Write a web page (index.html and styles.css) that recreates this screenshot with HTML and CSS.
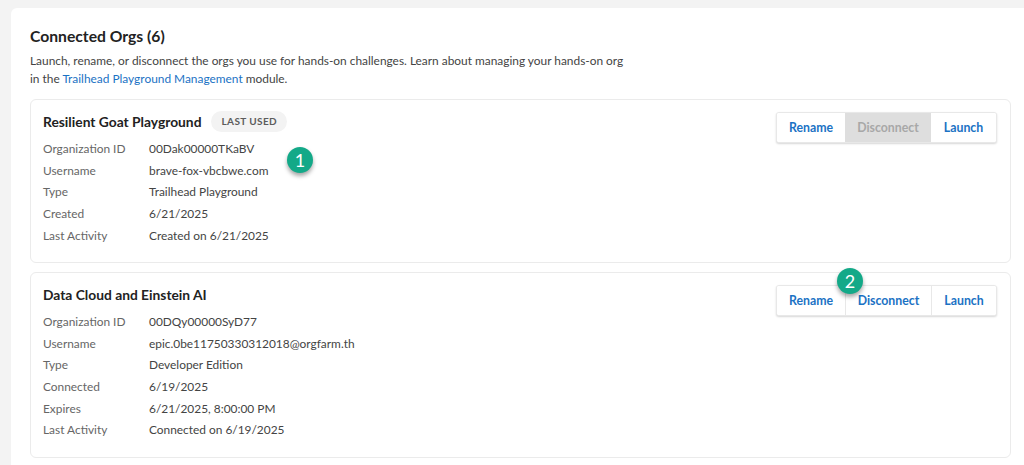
FILE: index.html
```html
<!DOCTYPE html>
<html lang="en">
<head>
<meta charset="utf-8">
<title>Connected Orgs</title>
<link rel="stylesheet" href="styles.css">
</head>
<body>
<main class="panel">
  <h1 class="heading">Connected Orgs (6)</h1>
  <p class="intro">Launch, rename, or disconnect the orgs you use for hands-on challenges. Learn about managing your hands-on org<br>in the <a class="link" href="#">Trailhead Playground Management</a> module.</p>

  <section class="org org-first">
    <div class="org-info">
      <div class="org-title"><h2 class="org-name">Resilient Goat Playground</h2><span class="pill">LAST USED</span></div>
      <dl class="facts">
        <dt>Organization ID</dt><dd>00Dak00000TKaBV</dd>
        <dt>Username</dt><dd>brave-fox-vbcbwe.com</dd>
        <dt>Type</dt><dd>Trailhead Playground</dd>
        <dt>Created</dt><dd>6/21/2025</dd>
        <dt>Last Activity</dt><dd>Created on 6/21/2025</dd>
      </dl>
    </div>
    <div class="actions">
      <button class="btn btn-rename">Rename</button><button class="btn btn-disconnect btn-disabled">Disconnect</button><button class="btn btn-launch">Launch</button>
    </div>
    <span class="marker marker-one">1</span>
  </section>

  <section class="org org-second">
    <div class="org-info">
      <div class="org-title"><h2 class="org-name">Data Cloud and Einstein AI</h2></div>
      <dl class="facts">
        <dt>Organization ID</dt><dd>00DQy00000SyD77</dd>
        <dt>Username</dt><dd>epic.0be11750330312018@orgfarm.th</dd>
        <dt>Type</dt><dd>Developer Edition</dd>
        <dt>Connected</dt><dd>6/19/2025</dd>
        <dt>Expires</dt><dd>6/21/2025, 8:00:00 PM</dd>
        <dt>Last Activity</dt><dd>Connected on 6/19/2025</dd>
      </dl>
    </div>
    <div class="actions">
      <button class="btn btn-rename">Rename</button><button class="btn btn-disconnect">Disconnect</button><button class="btn btn-launch">Launch</button>
    </div>
    <span class="marker marker-two">2</span>
  </section>
</main>
</body>
</html>
```
FILE: styles.css
```css
html, body {
  margin: 0;
  height: 465px;
  overflow: hidden;
  background: #f3f3f3;
}
body {
  padding: 8px 0 0 11px;
  box-sizing: border-box;
  font-family: Lato, sans-serif;
  color: #444;
}
.panel {
  background: #fff;
  border-radius: 6px 0 0 0;
  padding: 18px 13px 0 19px;
  height: 470px;
  box-sizing: border-box;
}
.heading {
  margin: 0;
  font-size: 15.7px;
  line-height: 20px;
  font-weight: 700;
  color: #222;
}
.intro {
  margin: 6px 0 0;
  font-size: 11.9px;
  line-height: 18px;
  color: #444;
}
.link {
  color: #1b72c4;
  text-decoration: none;
}
.org {
  position: relative;
  display: flex;
  justify-content: space-between;
  box-sizing: border-box;
  border: 1px solid #ebebeb;
  border-radius: 6px;
  padding: 12px 13px 0 12px;
}
.org-first {
  margin-top: 11px;
  height: 164px;
}
.org-second {
  margin-top: 9px;
  height: 186px;
}
.org-title {
  display: flex;
  align-items: center;
  height: 19px;
}
.org-name {
  margin: 0;
  font-size: 13.8px;
  font-weight: 700;
  color: #222;
}
.pill {
  margin-left: 10px;
  padding: 0 10px;
  height: 21px;
  line-height: 21px;
  border-radius: 11px;
  background: #f3f3f3;
  font-size: 10px;
  font-weight: 700;
  letter-spacing: 0.4px;
  color: #5c5c5c;
}
.facts {
  display: grid;
  grid-template-columns: 106px auto;
  grid-auto-rows: 21.7px;
  align-items: center;
  margin: 6.5px 0 0;
  font-size: 11.9px;
}
.facts dt { color: #666; }
.facts dd { margin: 0; color: #444; }
.actions {
  display: flex;
  align-self: flex-start;
  border: 1px solid #e8e8e8;
  border-radius: 3px;
  box-shadow: 0 1px 2px rgba(0, 0, 0, 0.16);
  background: #fff;
  overflow: hidden;
}
.btn {
  height: 29px;
  padding: 0;
  border: 0;
  border-left: 1px solid #e8e8e8;
  background: #fff;
  font-family: inherit;
  font-size: 12.3px;
  font-weight: 700;
  color: #1b72c4;
}
.btn:first-child { border-left: 0; }
.btn-rename { width: 68px; }
.btn-disconnect { width: 86px; }
.btn-launch { width: 65px; }
.btn-disabled {
  background: #dedede;
  color: #a8a8a8;
  border-left: 0;
}
.btn-disabled + .btn { border-left: 0; }
.marker {
  position: absolute;
  width: 26px;
  height: 26px;
  border-radius: 50%;
  background: #13a988;
  box-shadow: 0 3px 4px rgba(0, 0, 0, 0.35);
  color: #fff;
  font-size: 18px;
  line-height: 26px;
  text-align: center;
}
.marker-one { left: 256px; top: 47px; }
.marker-two { left: 806px; top: -5px; }
```
